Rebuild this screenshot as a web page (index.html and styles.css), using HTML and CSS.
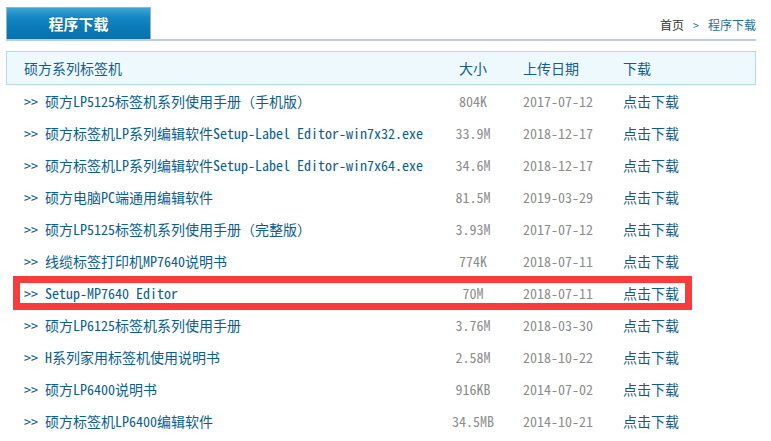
FILE: index.html
```html
<!DOCTYPE html>
<html lang="zh-CN">
<head>
    <meta charset="UTF-8">
    <title>程序下载</title>
    <link rel="stylesheet" href="styles.css">
</head>
<body>
    <div class="page">
        <div class="topbar">
            <div class="tab">程序下载</div>
            <div class="crumb"><a href="#" class="home">首页</a> <span class="sep">&gt;</span> <a href="#">程序下载</a></div>
        </div>

        <div class="list">
            <div class="row head">
                <div class="name">硕方系列标签机</div>
                <div class="size">大小</div>
                <div class="date">上传日期</div>
                <div class="dl">下载</div>
            </div>

            <div class="row">
                <div class="name">&gt;&gt; 硕方LP5125标签机系列使用手册（手机版）</div>
                <div class="size">804K</div>
                <div class="date">2017-07-12</div>
                <a href="#" class="dl">点击下载</a>
            </div>
            <div class="row">
                <div class="name">&gt;&gt; 硕方标签机LP系列编辑软件Setup-Label Editor-win7x32.exe</div>
                <div class="size">33.9M</div>
                <div class="date">2018-12-17</div>
                <a href="#" class="dl">点击下载</a>
            </div>
            <div class="row">
                <div class="name">&gt;&gt; 硕方标签机LP系列编辑软件Setup-Label Editor-win7x64.exe</div>
                <div class="size">34.6M</div>
                <div class="date">2018-12-17</div>
                <a href="#" class="dl">点击下载</a>
            </div>
            <div class="row">
                <div class="name">&gt;&gt; 硕方电脑PC端通用编辑软件</div>
                <div class="size">81.5M</div>
                <div class="date">2019-03-29</div>
                <a href="#" class="dl">点击下载</a>
            </div>
            <div class="row">
                <div class="name">&gt;&gt; 硕方LP5125标签机系列使用手册（完整版）</div>
                <div class="size">3.93M</div>
                <div class="date">2017-07-12</div>
                <a href="#" class="dl">点击下载</a>
            </div>
            <div class="row">
                <div class="name">&gt;&gt; 线缆标签打印机MP7640说明书</div>
                <div class="size">774K</div>
                <div class="date">2018-07-11</div>
                <a href="#" class="dl">点击下载</a>
            </div>
            <div class="row marked">
                <div class="name">&gt;&gt; Setup-MP7640 Editor</div>
                <div class="size">70M</div>
                <div class="date">2018-07-11</div>
                <a href="#" class="dl">点击下载</a>
            </div>
            <div class="row">
                <div class="name">&gt;&gt; 硕方LP6125标签机系列使用手册</div>
                <div class="size">3.76M</div>
                <div class="date">2018-03-30</div>
                <a href="#" class="dl">点击下载</a>
            </div>
            <div class="row">
                <div class="name">&gt;&gt; H系列家用标签机使用说明书</div>
                <div class="size">2.58M</div>
                <div class="date">2018-10-22</div>
                <a href="#" class="dl">点击下载</a>
            </div>
            <div class="row">
                <div class="name">&gt;&gt; 硕方LP6400说明书</div>
                <div class="size">916KB</div>
                <div class="date">2014-07-02</div>
                <a href="#" class="dl">点击下载</a>
            </div>
            <div class="row">
                <div class="name">&gt;&gt; 硕方标签机LP6400编辑软件</div>
                <div class="size">34.5MB</div>
                <div class="date">2014-10-21</div>
                <a href="#" class="dl">点击下载</a>
            </div>
        </div>
    </div>
</body>
</html>
```

FILE: styles.css
```css
*,
*::before,
*::after {
    margin: 0;
    padding: 0;
    box-sizing: border-box;
}

body {
    font-family: "Noto Sans Mono CJK SC", "Noto Sans CJK SC", monospace;
    font-size: 14px;
    color: #0b5d8c;
    background: #fff;
    overflow: hidden;
}

a {
    text-decoration: none;
    color: #0b5d8c;
}

.page {
    padding: 7px 15px 0 6px;
}

/* title bar */
.topbar {
    display: flex;
    justify-content: space-between;
    align-items: flex-end;
    height: 34px;
    border-bottom: 2px solid #b9d0d8;
}

.tab {
    width: 145px;
    height: 32px;
    border: 1px solid #a3b2b9;
    border-bottom: none;
    background: linear-gradient(#3fa6d6 0%, #1487c4 30%, #0a7cb9 60%, #0672ad 100%);
    color: #fff;
    font-family: "Noto Sans CJK SC", sans-serif;
    font-size: 15px;
    font-weight: bold;
    line-height: 31px;
    text-align: center;
    text-shadow: 0 0 1px rgba(0, 0, 0, 0.3);
}

.crumb {
    align-self: center;
    font-size: 12px;
    color: #1f6f9d;
    margin-top: 2px;
}

.crumb .home {
    color: #333;
}

.crumb .sep {
    color: #1f6f9d;
    margin: 0 3px;
}

.crumb a {
    color: #1f6f9d;
}

/* file list */
.list {
    margin-top: 10px;
}

.row {
    display: grid;
    grid-template-columns: 414px 70px 115px 1fr;
    align-items: center;
    height: 32px;
    padding-left: 18px;
    white-space: nowrap;
}

.row.head {
    height: 34px;
    padding-left: 17px;
    border: 1px solid #b3dce8;
    background: #edf9fd;
    color: #13608e;
}

.size {
    text-align: center;
    color: #8c8c8c;
}

.date {
    padding-left: 15px;
    color: #8c8c8c;
}

.head .size,
.head .date {
    color: #13608e;
}

.dl {
    color: #0b5d8c;
}

.row.marked {
    position: relative;
}

.row.marked::after {
    content: "";
    position: absolute;
    left: 7px;
    top: -1px;
    width: 679px;
    height: 34px;
    border: 7px solid #f63c3c;
    pointer-events: none;
}
```
